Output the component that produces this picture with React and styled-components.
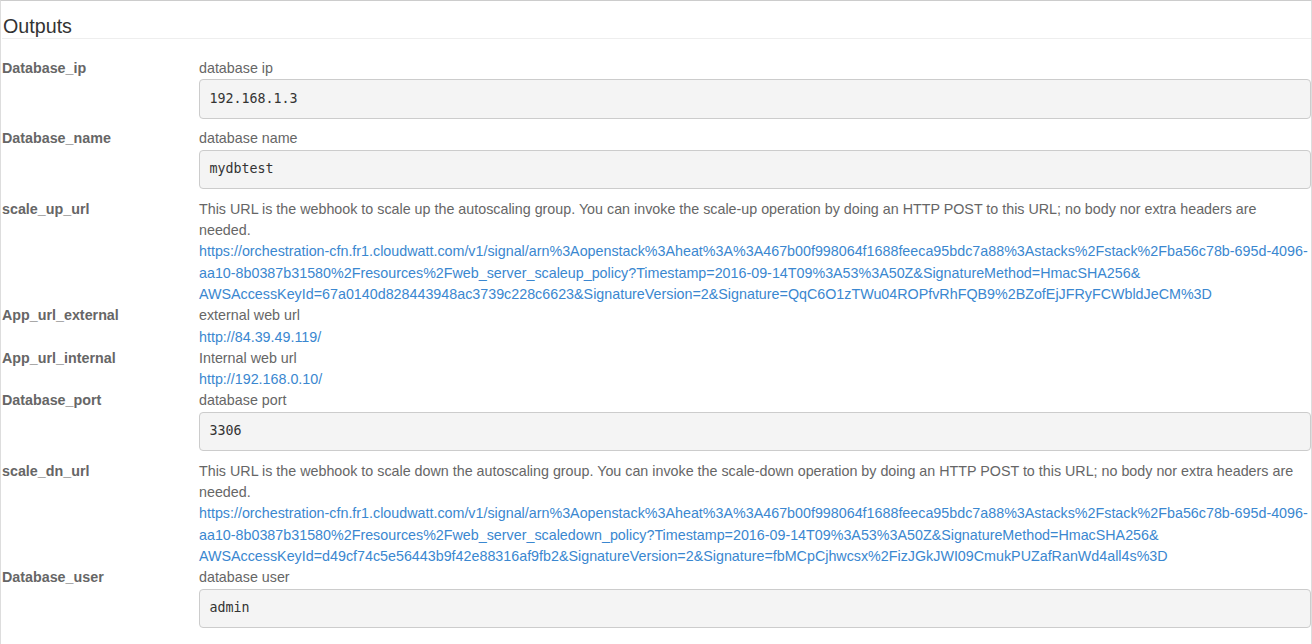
import React from 'react';
import styled, { createGlobalStyle } from 'styled-components';

const GlobalStyle = createGlobalStyle`
  body {
    margin: 0;
    background: #fff;
    font-family: "Liberation Sans", Arial, sans-serif;
    font-size: 14.3px;
    color: #333;
  }
`;

const outputs = [
  { key: 'Database_ip', description: 'database ip', value: '192.168.1.3', kind: 'pre' },
  { key: 'Database_name', description: 'database name', value: 'mydbtest', kind: 'pre' },
  {
    key: 'scale_up_url',
    description:
      'This URL is the webhook to scale up the autoscaling group. You can invoke the scale-up operation by doing an HTTP POST to this URL; no body nor extra headers are needed.',
    value: [
      'https://orchestration-cfn.fr1.cloudwatt.com/v1/signal/arn%3Aopenstack%3Aheat%3A%3A467b00f998064f1688feeca95bdc7a88%3Astacks%2Fstack%2Fba56c78b-695d-4096-aa10-8b0387b31580%2Fresources%2Fweb_server_scaleup_policy?Timestamp=2016-09-14T09%3A53%3A50Z&SignatureMethod=HmacSHA256&',
      'AWSAccessKeyId=67a0140d828443948ac3739c228c6623&',
      'SignatureVersion=2&',
      'Signature=QqC6O1zTWu04ROPfvRhFQB9%2BZofEjJFRyFCWbldJeCM%3D',
    ],
    kind: 'link',
  },
  { key: 'App_url_external', description: 'external web url', value: ['http://84.39.49.119/'], kind: 'link' },
  { key: 'App_url_internal', description: 'Internal web url', value: ['http://192.168.0.10/'], kind: 'link' },
  { key: 'Database_port', description: 'database port', value: '3306', kind: 'pre' },
  {
    key: 'scale_dn_url',
    description:
      'This URL is the webhook to scale down the autoscaling group. You can invoke the scale-down operation by doing an HTTP POST to this URL; no body nor extra headers are needed.',
    value: [
      'https://orchestration-cfn.fr1.cloudwatt.com/v1/signal/arn%3Aopenstack%3Aheat%3A%3A467b00f998064f1688feeca95bdc7a88%3Astacks%2Fstack%2Fba56c78b-695d-4096-aa10-8b0387b31580%2Fresources%2Fweb_server_scaledown_policy?Timestamp=2016-09-14T09%3A53%3A50Z&SignatureMethod=HmacSHA256&',
      'AWSAccessKeyId=d49cf74c5e56443b9f42e88316af9fb2&',
      'SignatureVersion=2&',
      'Signature=fbMCpCjhwcsx%2FizJGkJWI09CmukPUZafRanWd4all4s%3D',
    ],
    kind: 'link',
  },
  { key: 'Database_user', description: 'database user', value: 'admin', kind: 'pre' },
];

const Panel = styled.div`
  width: 1309px;
  border-top: 1px solid #ccc;
  border-left: 1px solid #ddd;
  border-right: 1px solid #ddd;
  padding: 0 0 0 1px;
  min-height: 643px;
`;

const Heading = styled.h3`
  margin: 15px 0 19px;
  padding: 0 0 1px 1px;
  font-size: 19.7px;
  font-weight: 400;
  line-height: 21px;
  color: #333;
  border-bottom: 1px solid #eee;
`;

const List = styled.dl`
  display: grid;
  grid-template-columns: 197px 1fr;
  margin: 0;
  line-height: 21.3px;
`;

const Key = styled.dt`
  grid-column: 1;
  font-weight: 700;
  color: #666;
`;

const Value = styled.dd`
  grid-column: 2;
  margin: 0;
  color: #666;
`;

const Description = styled.div``;

const Link = styled.a`
  color: #3a87d0;
  text-decoration: none;
`;

const Pre = styled.pre`
  margin: 0 0 9.5px;
  padding: 9.5px;
  font-family: "DejaVu Sans Mono", "Liberation Mono", monospace;
  font-size: 13.3px;
  line-height: 18.57px;
  color: #333;
  background: #f4f4f4;
  border: 1px solid #ccc;
  border-radius: 4px;
`;

export default function App() {
  return (
    <>
      <GlobalStyle />
      <Panel>
        <Heading>Outputs</Heading>
        <List>
          {outputs.map((o) => (
            <React.Fragment key={o.key}>
              <Key>{o.key}</Key>
              <Value>
                <Description>{o.description}</Description>
                {o.kind === 'pre' ? (
                  <Pre>{o.value}</Pre>
                ) : (
                  <Link href="#">
                    {o.value.map((part, i) => (
                      <React.Fragment key={i}>
                        {part}
                        <wbr />
                      </React.Fragment>
                    ))}
                  </Link>
                )}
              </Value>
            </React.Fragment>
          ))}
        </List>
      </Panel>
    </>
  );
}
